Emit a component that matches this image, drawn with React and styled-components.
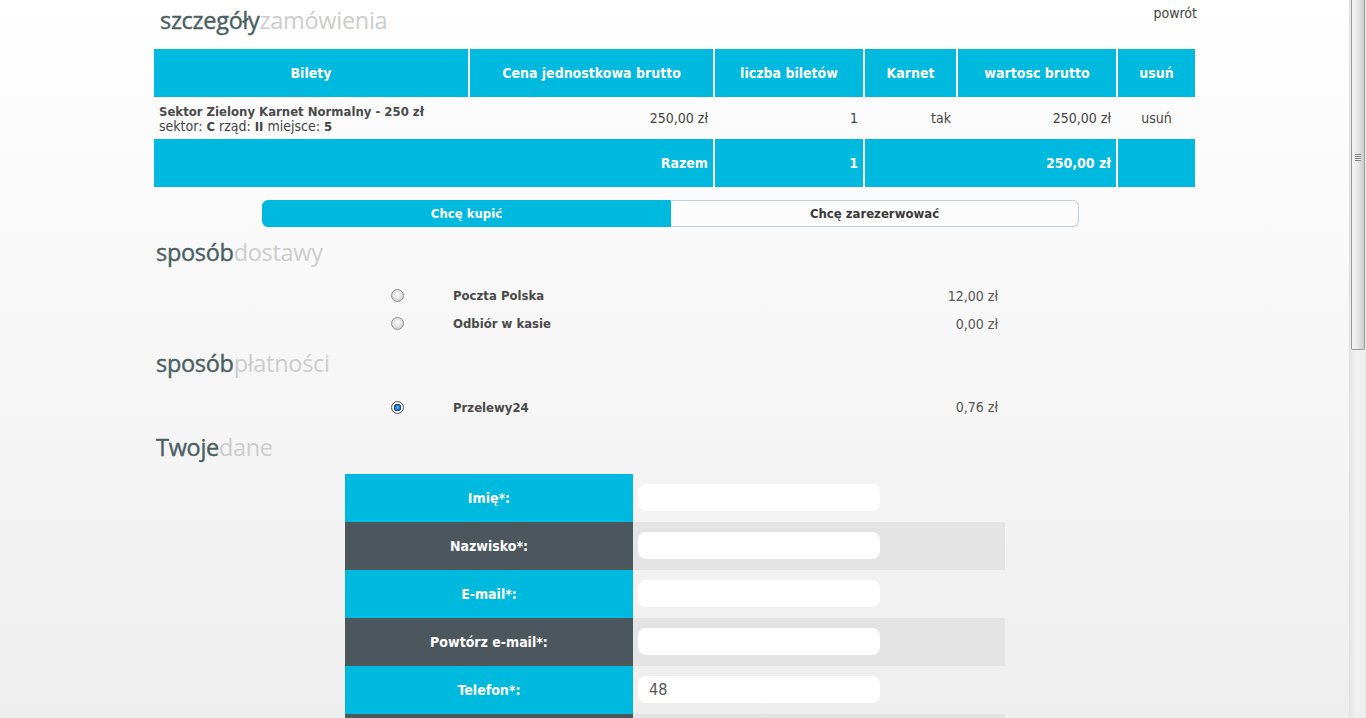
import React, { useState } from "react";
import styled, { createGlobalStyle } from "styled-components";

const CYAN = "#00b9de";
const DARK = "#4c575d";

const Global = createGlobalStyle`
  html {
    background: linear-gradient(to bottom, #ffffff 0px, #eeeeee 718px) fixed;
  }
  body {
    margin: 0 17px 0 0;
    font-family: "DejaVu Sans Condensed", "DejaVu Sans", sans-serif;
    font-size: 14px;
    color: #444;
  }
`;

const Page = styled.div`
  width: 1041px;
  margin: 0 auto;
  padding-bottom: 40px;
`;

/* drawing of the classic browser scrollbar seen in the screenshot */
const ScrollTrack = styled.div`
  position: fixed;
  top: 0;
  right: 0;
  width: 17px;
  height: 100vh;
  background: linear-gradient(to right, #e6e6e6, #f1f1f1 40%, #ececec);
  border-left: 1px solid #e0e0e0;
  box-sizing: border-box;
`;

const ScrollThumb = styled.div`
  margin: 0 0 0 1px;
  width: 14px;
  height: 350px;
  box-sizing: border-box;
  border: 1px solid #9a9a9a;
  border-top: none;
  border-radius: 0 0 2px 2px;
  background: linear-gradient(to right, #f5f5f5, #e9e9e9 45%, #d6d6d6 80%, #cfcfcf);
  display: flex;
  justify-content: center;
  padding-top: 154px;
`;

const Grip = styled.div`
  width: 6px;
  height: 7px;
  background: repeating-linear-gradient(to bottom, #7a7a7a 0, #7a7a7a 1px, #f4f4f4 1px, #f4f4f4 2px);
`;

const Top = styled.div`
  display: flex;
  justify-content: space-between;
  align-items: flex-start;
  height: 49px;
`;

const Heading = styled.h2`
  margin: 0;
  padding: ${({ $pad }) => $pad || "0"};
  font-family: "Open Sans", "Noto Sans", sans-serif;
  font-weight: 400;
  font-size: 23.5px;
  line-height: 1;
  letter-spacing: -0.3px;
  color: #4a5f62;
  -webkit-text-stroke: 0.4px #4a5f62;
  span {
    color: #cdcdcd;
    -webkit-text-stroke: 0;
  }
`;

const Back = styled.a`
  margin-top: 5px;
  margin-right: -2px;
  font-size: 14px;
  color: #444;
  text-decoration: none;
`;

const Grid = styled.div`
  display: grid;
  grid-template-columns: 314px 243px 148px 91px 158px 77px;
  column-gap: 2px;
`;

const Cell = styled.div`
  grid-column: ${({ $span }) => $span || "auto"};
  display: flex;
  align-items: center;
  justify-content: ${({ $align }) =>
    $align === "right" ? "flex-end" : $align === "left" ? "flex-start" : "center"};
  height: ${({ $h }) => $h}px;
  padding: 0 5px;
  box-sizing: border-box;
  background: ${({ $fill }) => ($fill ? CYAN : "transparent")};
  color: ${({ $fill }) => ($fill ? "#fff" : "#444")};
  font-weight: ${({ $bold }) => ($bold ? 700 : 400)};
`;

const Ticket = styled.div`
  line-height: 14px;
  padding-top: 2px;
  b {
    font-size: 13px;
    color: #444;
  }
`;

const TicketName = styled.div`
  font-size: 13px;
  font-weight: 700;
  color: #4a4a4a;
`;

const Tabs = styled.div`
  display: flex;
  width: 817px;
  height: 27px;
  margin: 13px 0 0 108px;
  box-sizing: border-box;
`;

const Tab = styled.button`
  flex: 1;
  border: 1px solid ${({ $active }) => ($active ? CYAN : "#c6d0d8")};
  border-left: ${({ $active }) => ($active ? "" : "none")};
  border-radius: ${({ $active }) => ($active ? "6px 0 0 6px" : "0 6px 6px 0")};
  background: ${({ $active }) => ($active ? CYAN : "#fcfcfc")};
  color: ${({ $active }) => ($active ? "#fff" : "#3a3a3a")};
  font-family: inherit;
  font-size: 13px;
  font-weight: 700;
  cursor: pointer;
  padding: 0;
`;

const Options = styled.div`
  display: flex;
  flex-direction: column;
  gap: 10px;
  padding: ${({ $pad }) => $pad};
`;

const OptionRow = styled.label`
  display: grid;
  grid-template-columns: 13px 1fr auto;
  column-gap: 49px;
  align-items: center;
  height: 18px;
  padding: 0 197px 0 237px;
  cursor: pointer;
`;

const Radio = styled.input.attrs({ type: "radio" })`
  appearance: none;
  margin: 0;
  width: 13px;
  height: 13px;
  border-radius: 50%;
  border: 1px solid #8f8f8f;
  box-sizing: border-box;
  background: radial-gradient(circle at 50% 40%, #fafafa 0, #e2e2e2 50%, #c4c4c4 100%);
  &:checked {
    background: radial-gradient(circle at 50% 50%, #5fb6f2 0, #1a6fb8 2.5px, #0c3f73 3.5px, #f4f4f4 4px, #dadada 100%);
    border-color: #5a5a5a;
  }
`;

const OptionName = styled.span`
  font-size: 13px;
  font-weight: 700;
  color: #4a4a4a;
`;

const Price = styled.span`
  color: #555;
`;

const Form = styled.div`
  width: 660px;
  margin-left: 191px;
`;

const FieldRow = styled.div`
  display: grid;
  grid-template-columns: 288px 1fr;
  height: 48px;
  background: ${({ $odd }) => ($odd ? "#e4e4e4" : "transparent")};
`;

const FieldLabel = styled.label`
  display: flex;
  align-items: center;
  justify-content: center;
  background: ${({ $odd }) => ($odd ? DARK : CYAN)};
  color: #fff;
  font-size: 14px;
  font-weight: 700;
`;

const FieldInput = styled.input`
  align-self: center;
  width: 242px;
  height: 27px;
  margin-left: 5px;
  box-sizing: border-box;
  border: none;
  border-radius: 8px;
  background: #fff;
  padding: 0 11px;
  font-family: inherit;
  font-size: 16px;
  color: #555;
  outline: none;
`;

const Submit = styled.button`
  display: block;
  margin: 24px 0 0 288px;
  width: 180px;
  height: 34px;
  border: none;
  border-radius: 6px;
  background: ${CYAN};
  color: #fff;
  font-family: inherit;
  font-weight: 700;
  font-size: 13px;
`;

const fields = [
  { label: "Imię*:", value: "" },
  { label: "Nazwisko*:", value: "" },
  { label: "E-mail*:", value: "" },
  { label: "Powtórz e-mail*:", value: "" },
  { label: "Telefon*:", value: "48" },
  { label: "Ulica*:", value: "" },
  { label: "Kod pocztowy*:", value: "" },
  { label: "Miasto*:", value: "" },
];

export default function App() {
  const [mode, setMode] = useState("buy");
  const [delivery, setDelivery] = useState(null);
  const [payment, setPayment] = useState("p24");

  return (
    <>
      <Global />
      <Page>
        <Top>
          <Heading $pad="9px 0 0 6px">
            szczegóły<span>zamówienia</span>
          </Heading>
          <Back href="#">powrót</Back>
        </Top>

        <Grid>
          <Cell $h={48} $fill $bold>Bilety</Cell>
          <Cell $h={48} $fill $bold>Cena jednostkowa brutto</Cell>
          <Cell $h={48} $fill $bold>liczba biletów</Cell>
          <Cell $h={48} $fill $bold>Karnet</Cell>
          <Cell $h={48} $fill $bold>wartosc brutto</Cell>
          <Cell $h={48} $fill $bold>usuń</Cell>

          <Cell $h={42} $align="left">
            <Ticket>
              <TicketName>Sektor Zielony Karnet Normalny - 250 zł</TicketName>
              sektor: <b>C</b> rząd: <b>II</b> miejsce: <b>5</b>
            </Ticket>
          </Cell>
          <Cell $h={42} $align="right">250,00 zł</Cell>
          <Cell $h={42} $align="right">1</Cell>
          <Cell $h={42} $align="right">tak</Cell>
          <Cell $h={42} $align="right">250,00 zł</Cell>
          <Cell $h={42}>usuń</Cell>

          <Cell $h={48} $span="1 / 3" $fill $bold $align="right">Razem</Cell>
          <Cell $h={48} $fill $bold $align="right">1</Cell>
          <Cell $h={48} $span="4 / 6" $fill $bold $align="right">250,00 zł</Cell>
          <Cell $h={48} $fill />
        </Grid>

        <Tabs>
          <Tab $active={mode === "buy"} onClick={() => setMode("buy")}>Chcę kupić</Tab>
          <Tab $active={mode === "reserve"} onClick={() => setMode("reserve")}>Chcę zarezerwować</Tab>
        </Tabs>

        <Heading $pad="14px 0 0 2px">
          sposób<span>dostawy</span>
        </Heading>
        <Options $pad="22px 0 12px">
          <OptionRow>
            <Radio name="delivery" checked={delivery === "post"} onChange={() => setDelivery("post")} />
            <OptionName>Poczta Polska</OptionName>
            <Price>12,00 zł</Price>
          </OptionRow>
          <OptionRow>
            <Radio name="delivery" checked={delivery === "desk"} onChange={() => setDelivery("desk")} />
            <OptionName>Odbiór w kasie</OptionName>
            <Price>0,00 zł</Price>
          </OptionRow>
        </Options>

        <Heading $pad="7px 0 0 2px">
          sposób<span>płatności</span>
        </Heading>
        <Options $pad="23px 0 12px">
          <OptionRow>
            <Radio name="payment" checked={payment === "p24"} onChange={() => setPayment("p24")} />
            <OptionName>Przelewy24</OptionName>
            <Price>0,76 zł</Price>
          </OptionRow>
        </Options>

        <Heading $pad="8px 0 14px 2px">
          Twoje<span>dane</span>
        </Heading>
        <Form>
          {fields.map((f, i) => (
            <FieldRow key={f.label} $odd={i % 2 === 1}>
              <FieldLabel $odd={i % 2 === 1}>{f.label}</FieldLabel>
              <FieldInput defaultValue={f.value} />
            </FieldRow>
          ))}
          <Submit>Dalej</Submit>
        </Form>
      </Page>
      <ScrollTrack>
        <ScrollThumb>
          <Grip />
        </ScrollThumb>
      </ScrollTrack>
    </>
  );
}
